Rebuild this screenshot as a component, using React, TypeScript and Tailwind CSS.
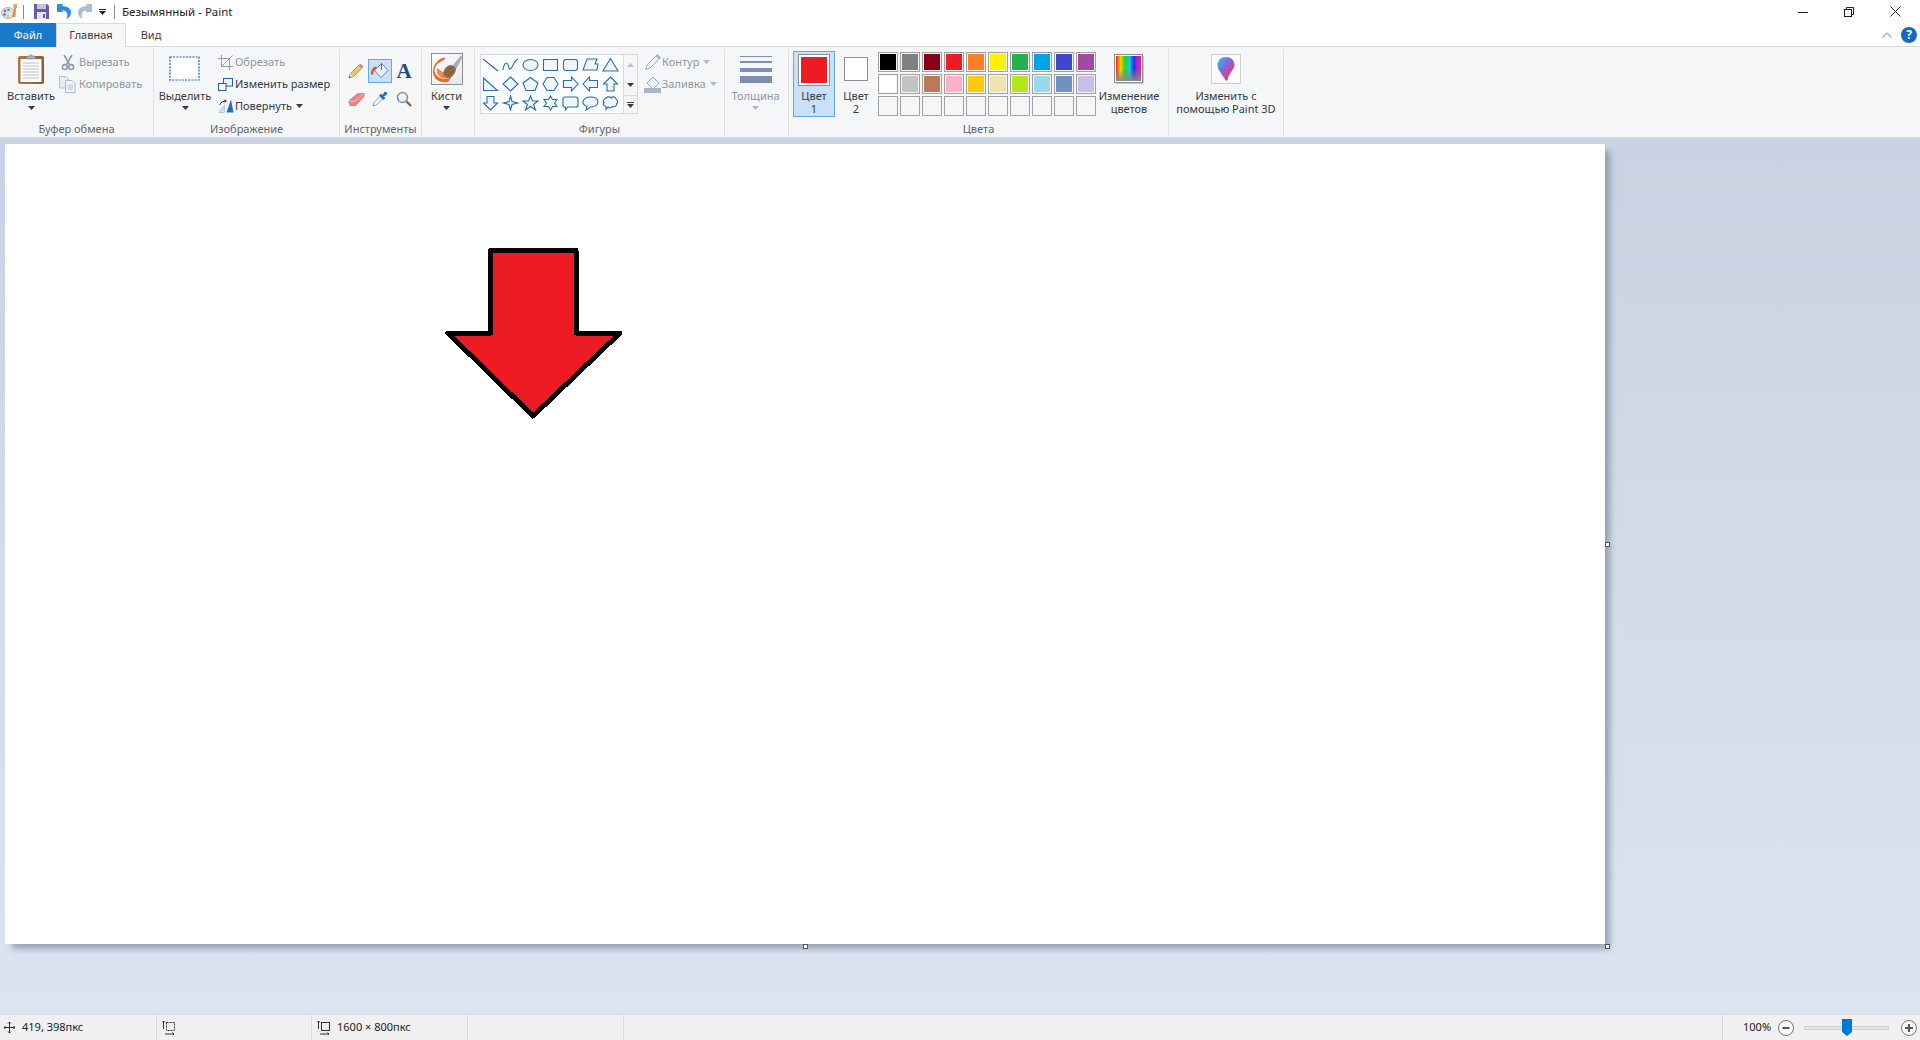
import React from "react";

const row1 = ["#000000", "#7f7f7f", "#880015", "#ed1c24", "#ff7f27", "#fff200", "#22b14c", "#00a2e8", "#3f48cc", "#a349a4"];
const row2 = ["#ffffff", "#c3c3c3", "#b97a57", "#ffaec9", "#ffc90e", "#efe4b0", "#b5e61d", "#99d9ea", "#7092be", "#c8bfe7"];
const row3 = Array.from({ length: 10 }, () => "");

// gallery shapes, one 16x16 path per cell
const shapes = [
  "M1 2L16 14",
  "M1 13C2 6 5 4 6 8S8 14 10 10 13 3 16 2",
  "M8.5 2.5C13 2.5 16 5 16 8S13 13.5 8.5 13.5 1 11 1 8 4 2.5 8.5 2.5Z",
  "M1.5 2.5H15.5V13.5H1.5Z",
  "M4 2.5H13Q15.5 2.5 15.5 5V11Q15.5 13.5 13 13.5H4Q1.5 13.5 1.5 11V5Q1.5 2.5 4 2.5Z",
  "M5 2H15L13 7H16L15 13H1Z",
  "M8.5 1.5L16 14H1Z",
  "M1.5 2L15.5 14.5H1.5Z",
  "M8.5 1L16 8L8.5 15L1 8Z",
  "M8.5 1.5L16 7L13 14.5H4L1 7Z",
  "M5 1.5H12L16 8L12 14.5H5L1 8Z",
  "M1.5 4.5H9.5V1L16 8L9.5 15V11.5H1.5Z",
  "M15.5 4.5H7.5V1L1 8L7.5 15V11.5H15.5Z",
  "M8.5 1L15.5 8H12V15H5V8H1.5Z",
  "M5 1.5H12V8H15.5L8.5 15L1.5 8H5Z",
  "M8.5 1L10 6.5L15.5 8L10 9.5L8.5 15L7 9.5L1.5 8L7 6.5Z",
  "M8.5 1L10.5 6H16L11.5 9.5L13.5 15L8.5 11.5L3.5 15L5.5 9.5L1 6H6.5Z",
  "M8.5 1L10.5 4.5H15L12.5 8L15 11.5H10.5L8.5 15L6.5 11.5H2L4.5 8L2 4.5H6.5Z",
  "M3 2H14Q16 2 16 4V10Q16 12 14 12H6L3.5 15V12H3Q1 12 1 10V4Q1 2 3 2Z",
  "M8.5 2C13 2 16 4 16 7S13 12 8.5 12L4 15L5 11.5C2.5 10.5 1 9 1 7 1 4 4 2 8.5 2Z",
  "M4 3C6 1 8 2 9 3 11 1 14 2 14 4 16 5 16 8 14.5 9 15 11 12 12.5 10.5 11.5 9 13.5 6.5 13 6 12L4 14.5V11.5C2 11.5 .5 9 2 7.5 .5 6 2 3.5 4 3Z",
];

function Caret({ color = "#3b3b3b" }: { color?: string }) {
  return (
    <svg width="7" height="4" viewBox="0 0 7 4" className="block">
      <path d="M0 0H7L3.5 4Z" fill={color} />
    </svg>
  );
}

function PasteIcon() {
  return (
    <svg width="28" height="32" viewBox="0 0 28 32">
      <defs>
        <linearGradient id="brd" x1="0" y1="0" x2="1" y2="0">
          <stop offset="0" stopColor="#a9794a" />
          <stop offset="1" stopColor="#8a5d34" />
        </linearGradient>
      </defs>
      <rect x="1" y="3" width="26" height="28" rx="2" fill="url(#brd)" />
      <rect x="3.5" y="6" width="21" height="23" fill="#fbfbfb" />
      <path d="M6 10H22M6 13H22M6 16H22M6 19H22M6 22H22M6 25H22" stroke="#b4c0cf" />
      <path d="M9 6L10.5 3H12.5Q14 0 15.5 3H17.5L19 6Z" fill="#a8adb3" stroke="#7d8288" strokeWidth=".6" />
    </svg>
  );
}

function CutIcon() {
  return (
    <svg width="14" height="17" viewBox="0 0 14 17" fill="none" stroke="#8c9cb2" strokeWidth="1.6">
      <path d="M3 1L8.5 10.5M11 1L5.5 10.5" />
      <circle cx="3.8" cy="13" r="2.4" />
      <circle cx="10.2" cy="13" r="2.4" />
    </svg>
  );
}

function CopyIcon() {
  return (
    <svg width="17" height="17" viewBox="0 0 17 17">
      <path d="M.5.5H7L9.5 3V12H.5Z" fill="#e4ebf4" stroke="#b3c0d2" />
      <path d="M6.5 4.5H13L16 7.5V16.5H6.5Z" fill="#f3f6fa" stroke="#a9b8cb" />
      <path d="M8.5 9H14M8.5 11H14M8.5 13H14" stroke="#b3c0d2" />
    </svg>
  );
}

function CropIcon() {
  return (
    <svg width="15" height="15" viewBox="0 0 15 15" fill="none" stroke="#8fa0b6">
      <path d="M3.5 0V11.5H15M0 3.5H11.5V15" />
      <path d="M3.5 11.5L11.5 3.5M11 4L14.5 .5" />
    </svg>
  );
}

function ResizeIcon() {
  return (
    <svg width="15" height="13" viewBox="0 0 15 13" fill="#fff" stroke="#1d5fa8">
      <rect x="5.5" y=".5" width="9" height="7.5" fill="#eef4fb" />
      <rect x=".5" y="5.5" width="7.5" height="7" />
    </svg>
  );
}

function RotateIcon() {
  return (
    <svg width="16" height="14" viewBox="0 0 16 14">
      <path d="M8.5 13.5L13 .5L15.5 13.5Z" fill="#2a6db3" />
      <path d="M1 13.5L6.5 6V13.5Z" fill="#cfe0f1" stroke="#8fb3d6" strokeWidth=".6" />
      <path d="M1.5 6Q3 2 7.5 2" fill="none" stroke="#333" />
      <path d="M6.5 .2L9 2L6.5 3.8Z" fill="#333" />
    </svg>
  );
}

function SelectIcon() {
  return (
    <svg width="32" height="26" viewBox="0 0 32 26">
      <rect x="1" y="1" width="29" height="23" fill="#fff" stroke="#1b5ea6" strokeWidth="1.2" strokeDasharray="2 1.2" />
    </svg>
  );
}

function PencilIcon({ tone = "color" }: { tone?: "color" | "gray" }) {
  if (tone === "gray") {
    return (
      <svg width="16" height="16" viewBox="0 0 16 16">
        <path d="M.5 15.5L2 11L11 2L14 5L5 14Z" fill="#f2f4f7" stroke="#9aa9bd" />
        <path d="M11 2L12.5 .5L15.5 3.5L14 5Z" fill="#b6c2d1" stroke="#9aa9bd" />
      </svg>
    );
  }
  return (
    <svg width="16" height="16" viewBox="0 0 16 16">
      <path d="M1 15L2.2 10.8L10.8 2.2L13.8 5.2L5.2 13.8Z" fill="#f1c85c" stroke="#9a7a34" strokeWidth=".7" />
      <path d="M1 15L2.2 10.8L5.2 13.8Z" fill="#f0dcb4" />
      <path d="M1 15L1.5 13L3 14.5Z" fill="#333" />
      <path d="M10.8 2.2L12.5 .5L15.5 3.5L13.8 5.2Z" fill="#d7848d" />
    </svg>
  );
}

function FillIcon() {
  return (
    <svg width="20" height="20" viewBox="0 0 20 20">
      <path d="M11.5 2.5L18 9.5L11 16.5L4.5 9.5Z" fill="#e9eff6" stroke="#6b88a8" />
      <path d="M11.5 2V9" stroke="#56708e" />
      <path d="M6.5 6.5Q2 7.5 2 13.5" fill="none" stroke="#e7591f" strokeWidth="2.5" />
    </svg>
  );
}

function EraserIcon() {
  return (
    <svg width="17" height="15" viewBox="0 0 17 15">
      <path d="M.8 9L9.5 1.5H16.2L16 4.5L7.5 13.5H2Z" fill="#e98787" stroke="#c66b6b" strokeWidth=".7" />
      <path d="M.8 9L6.5 9.5L15.8 1.8" fill="none" stroke="#f6b9b9" />
    </svg>
  );
}

function DropperIcon() {
  return (
    <svg width="16" height="16" viewBox="0 0 16 16">
      <path d="M1 15L2 11.5L8 5.5L10.5 8L4.5 14Z" fill="#f3f6fa" stroke="#7c8797" strokeWidth=".8" />
      <path d="M7 4.5L9 2.5L10.5 4L12.5 .8Q15.5 .5 15.2 3.5L12 5.5L13.5 7L11.5 9Z" fill="#2673bb" />
    </svg>
  );
}

function LensIcon() {
  return (
    <svg width="16" height="16" viewBox="0 0 16 16">
      <circle cx="6.5" cy="6.5" r="5" fill="#eef3f8" stroke="#8b949e" strokeWidth="1.6" />
      <path d="M10.5 10.5L15 15" stroke="#8a6540" strokeWidth="2.4" />
    </svg>
  );
}

function BrushIcon() {
  return (
    <svg width="32" height="32" viewBox="0 0 32 32">
      <defs>
        <linearGradient id="bg-brush" x1="0" y1="0" x2="1" y2="1">
          <stop offset="0" stopColor="#ffffff" />
          <stop offset="1" stopColor="#e4e7ea" />
        </linearGradient>
      </defs>
      <rect x=".5" y=".5" width="31" height="31" fill="url(#bg-brush)" stroke="#8e8e8e" />
      <path d="M12 5Q16 4 13 7Q5 10 3.5 16Q3 22 9 25Q14 27 20 25L17 29Q8 30 4 25Q0 19 3.5 12Q7 6 12 5Z" fill="#ea6a2a" />
      <path d="M6 15L13 20L20 25Q12 27 8 23Q5 20 6 15Z" fill="#f08a45" />
      <path d="M12 21Q13 14 19 12Q23 12 25 15Q25 21 19 25Q15 26 12 21Z" fill="#8f6a45" />
      <path d="M15 20L21 14M17 23L23 17" stroke="#6d4f32" strokeWidth=".8" />
      <path d="M22 12L30 2.5L31.5 4L25.5 15.5Z" fill="#a4b0bf" />
    </svg>
  );
}

function ThicknessIcon() {
  return (
    <svg width="32" height="27" viewBox="0 0 32 27" fill="#7d8fb0">
      <rect x="0" y="0" width="32" height="1" />
      <rect x="0" y="5" width="32" height="2" />
      <rect x="0" y="12" width="32" height="4" />
      <rect x="0" y="20" width="32" height="7" />
    </svg>
  );
}

function BucketGrayIcon() {
  return (
    <svg width="17" height="17" viewBox="0 0 17 17">
      <rect x="0" y="12" width="17" height="5" fill="#a9b6c8" />
      <path d="M9 1L15 7L9 13L3 7Z" fill="#eef1f5" stroke="#98a6b8" />
    </svg>
  );
}

function RainbowIcon() {
  return (
    <svg width="30" height="30" viewBox="0 0 30 30">
      <defs>
        <linearGradient id="rb" x1="0" y1="0" x2="1" y2="0">
          <stop offset="0" stopColor="#ff2020" />
          <stop offset=".18" stopColor="#ffd800" />
          <stop offset=".36" stopColor="#20d820" />
          <stop offset=".54" stopColor="#10d0e0" />
          <stop offset=".72" stopColor="#2030f0" />
          <stop offset=".88" stopColor="#d020d0" />
          <stop offset="1" stopColor="#e02060" />
        </linearGradient>
        <linearGradient id="rbv" x1="0" y1="0" x2="0" y2="1">
          <stop offset="0" stopColor="#000" stopOpacity="0.05" />
          <stop offset=".5" stopColor="#808080" stopOpacity="0" />
          <stop offset="1" stopColor="#8a8a8a" stopOpacity="0.95" />
        </linearGradient>
      </defs>
      <rect x=".5" y=".5" width="28" height="28" fill="#fff" stroke="#8e8e8e" />
      <rect x="2" y="2" width="25" height="25" fill="url(#rb)" />
      <rect x="2" y="2" width="25" height="25" fill="url(#rbv)" />
      <path d="M29.5 2V29.5H2" fill="none" stroke="#c9c9c9" />
    </svg>
  );
}

function Paint3dIcon() {
  return (
    <svg width="30" height="30" viewBox="0 0 30 30">
      <defs>
        <linearGradient id="p3d" x1="0" y1="0" x2="1" y2="1">
          <stop offset="0" stopColor="#32c3e8" />
          <stop offset=".45" stopColor="#8a62e0" />
          <stop offset=".75" stopColor="#ee3a72" />
          <stop offset="1" stopColor="#f6a51c" />
        </linearGradient>
      </defs>
      <rect x=".5" y=".5" width="29" height="29" fill="#fbfbfb" stroke="#cfcfcf" />
      <path d="M15 3C20 3 23.5 6.5 23.5 11C23.5 16 18 18 16.5 26.5H14.5C13 22 6.5 17 6.5 11C6.5 6.5 10 3 15 3Z" fill="url(#p3d)" />
    </svg>
  );
}

function AppIcon() {
  return (
    <svg width="17" height="17" viewBox="0 0 17 17">
      <ellipse cx="7" cy="10" rx="6.5" ry="5.5" fill="#dbe6ee" stroke="#7f97ad" strokeWidth=".7" />
      <circle cx="4" cy="8" r="1.3" fill="#e14b3c" />
      <circle cx="7.5" cy="7" r="1.3" fill="#3ea34f" />
      <circle cx="3.5" cy="11.5" r="1.3" fill="#2f7cd0" />
      <circle cx="7" cy="13" r="1.2" fill="#e9b82e" />
      <path d="M11 14L13 5H15L14.5 14Z" fill="#e98f33" />
      <path d="M12.5 1H16V5H12.5Z" fill="#d9a36b" />
    </svg>
  );
}

function SaveIcon() {
  return (
    <svg width="15" height="15" viewBox="0 0 15 15">
      <path d="M0 0H13L15 2V15H0Z" fill="#6b5ba6" />
      <rect x="3" y="0" width="9" height="5" fill="#c9c3e2" />
      <rect x="3" y="8" width="9" height="7" fill="#e6e3f2" />
      <rect x="9" y="10" width="2" height="4" fill="#6b5ba6" />
    </svg>
  );
}

function UndoIcon({ color }: { color: string }) {
  return (
    <svg width="14" height="15" viewBox="0 0 14 15">
      <path d="M0 0L6.5 0L4.8 1.9Q14 2.2 14 8.5Q14 12.5 9.5 15Q11 12 10.2 9.5Q9 6 4.8 6.5L6.5 8L0 8Z" fill={color} />
    </svg>
  );
}

function HelpIcon() {
  return (
    <span className="flex h-[16px] w-[16px] items-center justify-center rounded-full bg-[#1668bf] text-[12px] font-bold leading-none text-white">
      ?
    </span>
  );
}

function SmallRow({
  icon,
  label,
  width,
  muted,
  caret,
}: {
  icon: React.ReactNode;
  label: string;
  width: string;
  muted?: boolean;
  caret?: boolean;
}) {
  return (
    <div className="flex h-[22px] items-center">
      <span className={`flex items-center justify-center ${width}`}>{icon}</span>
      <span className={muted ? "text-[#8f97a1]" : "text-[#333a44]"}>{label}</span>
      {caret && (
        <span className="ml-[4px]">
          <Caret color={muted ? "#b4bac2" : "#3b3b3b"} />
        </span>
      )}
    </div>
  );
}

function BigButton({
  icon,
  lines,
  width,
  muted,
  caret = true,
}: {
  icon: React.ReactNode;
  lines: string[];
  width: string;
  muted?: boolean;
  caret?: boolean;
}) {
  return (
    <div className={`flex flex-col items-center ${width}`}>
      <div className="flex h-[40px] items-center justify-center">{icon}</div>
      <div className={`text-center leading-[13px] ${muted ? "text-[#8f97a1]" : "text-[#333a44]"}`}>
        {lines.map((l) => (
          <div key={l} className="whitespace-nowrap">
            {l}
          </div>
        ))}
      </div>
      {caret && (
        <div className="mt-[4px]">
          <Caret color={muted ? "#b4bac2" : "#3b3b3b"} />
        </div>
      )}
    </div>
  );
}

function Group({
  width,
  label,
  children,
}: {
  width: string;
  label?: string;
  children: React.ReactNode;
}) {
  return (
    <div className={`flex h-full flex-col border-r border-[#e1e2e4] ${width}`}>
      <div className="flex flex-1">{children}</div>
      <div className="h-[14px] whitespace-nowrap text-center leading-[14px] text-[#5e6670]">{label}</div>
    </div>
  );
}

function Swatch({ color }: { color: string }) {
  return (
    <div className="h-[20px] w-[20px] border border-[#a0a0a0] p-[1px]">
      <div className="h-full w-full" style={{ backgroundColor: color || "transparent" }} />
    </div>
  );
}

function Ribbon() {
  const tools = [
    <PencilIcon key="pencil" />,
    <FillIcon key="fill" />,
    <span key="a" className="font-['Liberation_Serif',serif] text-[21px] font-bold leading-none text-[#1d4a80]">
      A
    </span>,
    <EraserIcon key="eraser" />,
    <DropperIcon key="dropper" />,
    <LensIcon key="lens" />,
  ];
  return (
    <div className="flex h-[92px] border-y border-[#dadbdc] bg-[#f5f6f7] pb-[1px] pt-[2px] text-[11px]">
      <Group width="w-[154px]" label="Буфер обмена">
        <BigButton icon={<PasteIcon />} lines={["Вставить"]} width="w-[62px]" />
        <div className="mt-[2px]">
          <SmallRow icon={<CutIcon />} label="Вырезать" width="-ml-[3px] w-[20px] pr-[3px]" muted />
          <SmallRow icon={<CopyIcon />} label="Копировать" width="-ml-[3px] w-[20px] pr-[3px]" muted />
        </div>
      </Group>

      <Group width="w-[186px]" label="Изображение">
        <BigButton icon={<SelectIcon />} lines={["Выделить"]} width="w-[62px]" />
        <div className="mt-[2px]">
          <SmallRow icon={<CropIcon />} label="Обрезать" width="w-[19px]" muted />
          <SmallRow icon={<ResizeIcon />} label="Изменить размер" width="w-[19px]" />
          <SmallRow icon={<RotateIcon />} label="Повернуть" width="w-[19px]" caret />
        </div>
      </Group>

      <Group width="w-[82px]" label="Инструменты">
        <div className="grid grid-cols-[repeat(3,24px)] grid-rows-[repeat(2,28px)] pl-[4px] pt-[8px]">
          {tools.map((tool, i) => (
            <div key={i} className="flex items-center justify-center">
              <div
                className={`flex h-[24px] w-[24px] items-center justify-center ${
                  i === 1 ? "border border-[#62a8eb] bg-[#c9e0f7]" : ""
                }`}
              >
                {tool}
              </div>
            </div>
          ))}
        </div>
      </Group>

      <Group width="w-[53px]">
        <BigButton icon={<BrushIcon />} lines={["Кисти"]} width="w-[49px]" />
      </Group>

      <Group width="w-[250px]" label="Фигуры">
        <div className="ml-[5px] mt-[5px] flex h-[60px] border border-[#dadbdc]">
          <div className="grid w-[142px] grid-cols-[repeat(7,20px)] grid-rows-3 bg-[#fbfcfe]">
            {shapes.map((d) => (
              <div key={d} className="flex items-center pl-[1px]">
                <svg width="17" height="16" viewBox="0 0 17 16">
                  <path d={d} fill={d.endsWith("Z") ? "#eef6fb" : "none"} stroke="#2a6db0" strokeWidth="1.1" />
                </svg>
              </div>
            ))}
          </div>
          <div className="flex w-[14px] flex-col border-l border-[#dadbdc]">
            <div className="flex h-[20px] items-center justify-center">
              <svg width="7" height="4" viewBox="0 0 7 4">
                <path d="M0 4H7L3.5 0Z" fill="#bcc3cc" />
              </svg>
            </div>
            <div className="flex h-[20px] items-center justify-center">
              <Caret />
            </div>
            <div className="flex h-[18px] flex-col items-center justify-center gap-[1px] border-t border-[#dadbdc]">
              <div className="h-[1px] w-[7px] bg-[#3b3b3b]" />
              <Caret />
            </div>
          </div>
        </div>
        <div className="ml-[5px] mt-[2px]">
          <SmallRow icon={<PencilIcon tone="gray" />} label="Контур" width="w-[19px]" muted caret />
          <SmallRow icon={<BucketGrayIcon />} label="Заливка" width="w-[19px]" muted caret />
        </div>
      </Group>

      <Group width="w-[64px]">
        <BigButton icon={<ThicknessIcon />} lines={["Толщина"]} width="w-[61px]" muted />
      </Group>

      <Group width="w-[380px]" label="Цвета">
        <div className="ml-[4px] mt-[2px] flex h-[66px] w-[42px] flex-col items-center border border-[#62a8eb] bg-[#c9e0f7] pt-[2px] text-center leading-[13px] text-[#333a44]">
          <div className="h-[32px] w-[32px] border border-[#8e8e8e] bg-white p-[2px]">
            <div className="h-full w-full bg-[#ed1c24]" />
          </div>
          <div className="mt-[3px]">Цвет</div>
          <div>1</div>
        </div>
        <div className="flex w-[42px] flex-col items-center text-center leading-[13px] text-[#333a44]">
          <div className="flex h-[40px] items-center">
            <div className="h-[24px] w-[24px] border border-[#8e8e8e] bg-white" />
          </div>
          <div>Цвет</div>
          <div>2</div>
        </div>
        <div className="ml-[1px] mt-[3px] grid h-fit grid-cols-[repeat(10,20px)] gap-[2px]">
          {[...row1, ...row2, ...row3].map((c, i) => (
            <Swatch key={i} color={c} />
          ))}
        </div>
        <BigButton icon={<RainbowIcon />} lines={["Изменение", "цветов"]} width="w-[66px]" caret={false} />
      </Group>

      <Group width="w-[115px]">
        <BigButton icon={<Paint3dIcon />} lines={["Изменить с", "помощью Paint 3D"]} width="w-full" caret={false} />
      </Group>
    </div>
  );
}

function Handle({ className }: { className: string }) {
  return <div className={`absolute h-[5px] w-[5px] border border-[#555] bg-white ${className}`} />;
}

function Canvas() {
  return (
    <div className="flex-1 bg-[linear-gradient(180deg,#c8d2e2_0%,#dbe5f1_100%)] pl-[5px] pt-[6px]">
      <div className="relative h-[800px] w-[1600px] bg-white shadow-[6px_6px_6px_-1px_rgba(100,115,140,0.55)]">
        <svg width="1600" height="800" className="block" shapeRendering="crispEdges">
          <polygon
            points="485.5,106.5 571,106.5 571,189 615,189 528,272 443,189 485.5,189"
            fill="#ed1c24"
            stroke="#000"
            strokeWidth="5"
            strokeLinejoin="round"
          />
        </svg>
        <Handle className="left-[1600px] top-[398px]" />
        <Handle className="left-[798px] top-[800px]" />
        <Handle className="left-[1600px] top-[800px]" />
      </div>
    </div>
  );
}

function StatusBar() {
  return (
    <div className="flex h-[26px] items-stretch border-t border-[#d9d9d9] bg-[#f0f0f0] text-[11px] text-[#222]">
      <div className="flex w-[157px] items-center gap-[7px] border-r border-[#d9d9d9] pl-[4px]">
        <svg width="11" height="11" viewBox="0 0 11 11" fill="none" stroke="#333">
          <path d="M5.5 0V11M0 5.5H11" />
          <path d="M4 1.5L5.5 0L7 1.5M4 9.5L5.5 11L7 9.5M1.5 4L0 5.5L1.5 7M9.5 4L11 5.5L9.5 7" />
        </svg>
        <span>419, 398пкс</span>
      </div>
      <div className="flex w-[155px] items-center border-r border-[#d9d9d9] pl-[5px]">
        <svg width="14" height="14" viewBox="0 0 14 14" fill="none" stroke="#333">
          <path d="M1.5 0V8M0 1.5L1.5 0L3 1.5M3 13H12M10.5 11.5L12 13L10.5 14" />
          <rect x="4.5" y="1.5" width="8" height="8" strokeDasharray="2 1" />
        </svg>
      </div>
      <div className="flex w-[156px] items-center gap-[6px] border-r border-[#d9d9d9] pl-[5px]">
        <svg width="14" height="14" viewBox="0 0 14 14" fill="none" stroke="#333">
          <path d="M1.5 0V8M0 1.5L1.5 0L3 1.5M3 13H12M10.5 11.5L12 13L10.5 14" />
          <rect x="4.5" y="1.5" width="8" height="8" />
        </svg>
        <span>1600 × 800пкс</span>
      </div>
      <div className="w-[156px] border-r border-[#d9d9d9]" />
      <div className="flex-1 border-r border-[#d9d9d9]" />
      <div className="flex w-[197px] items-center pl-[20px]">
        <span className="w-[35px]">100%</span>
        <svg width="16" height="16" viewBox="0 0 16 16" fill="#fafafa" stroke="#777">
          <circle cx="8" cy="8" r="7.5" />
          <path d="M4.5 8H11.5" strokeWidth="2" stroke="#555" />
        </svg>
        <div className="relative ml-[10px] h-[4px] w-[85px] border border-[#d2d2d2] bg-[#e4e4e4]">
          <svg width="10" height="17" viewBox="0 0 10 17" className="absolute left-[37px] top-[-8px]">
            <path d="M0 0H10V13L5 17L0 13Z" fill="#0078d7" />
          </svg>
        </div>
        <svg width="16" height="16" viewBox="0 0 16 16" fill="#fafafa" stroke="#777" className="ml-[12px]">
          <circle cx="8" cy="8" r="7.5" />
          <path d="M4 8H12M8 4V12" strokeWidth="2" stroke="#555" />
        </svg>
      </div>
    </div>
  );
}

export default function App() {
  return (
    <div className="flex h-[1040px] w-[1920px] flex-col overflow-hidden bg-white font-['Noto_Sans',sans-serif]">
      {/* title bar */}
      <div className="flex h-[23px] items-center">
        <span className="ml-[1px]">
          <AppIcon />
        </span>
        <div className="ml-[5px] h-[14px] w-[1px] bg-[#8a8a8a]" />
        <span className="ml-[10px]">
          <SaveIcon />
        </span>
        <span className="ml-[8px]">
          <UndoIcon color="#2b8fdc" />
        </span>
        <span className="ml-[7px] -scale-x-100">
          <UndoIcon color="#a9bdd2" />
        </span>
        <div className="ml-[7px] flex flex-col items-center gap-[1px]">
          <div className="h-[1px] w-[7px] bg-[#222]" />
          <Caret color="#222" />
        </div>
        <div className="ml-[8px] h-[14px] w-[1px] bg-[#8a8a8a]" />
        <span className="ml-[7px] text-[11.5px] text-[#222]">Безымянный - Paint</span>
        <div className="ml-auto flex h-full items-center pr-[2px]">
          <div className="flex w-[46px] justify-center">
            <svg width="10" height="10" viewBox="0 0 10 10" stroke="#222">
              <path d="M0 5.5H10" />
            </svg>
          </div>
          <div className="flex w-[46px] justify-center">
            <svg width="10" height="10" viewBox="0 0 10 10" fill="none" stroke="#222">
              <rect x=".5" y="2.5" width="7" height="7" />
              <path d="M2.5 2.5V.5H9.5V7.5H7.5" />
            </svg>
          </div>
          <div className="flex w-[46px] justify-center">
            <svg width="11" height="11" viewBox="0 0 11 11" stroke="#222">
              <path d="M.5 .5L10.5 10.5M10.5 .5L.5 10.5" />
            </svg>
          </div>
        </div>
      </div>

      {/* tabs */}
      <div className="relative z-10 -mb-[1px] flex h-[24px] text-[11px]">
        <div className="flex w-[56px] items-center justify-center bg-[#1979ca] text-white">Файл</div>
        <div className="flex w-[70px] items-center justify-center border-x border-t border-[#dadbdc] bg-[#f5f6f7] text-[#333a44]">
          Главная
        </div>
        <div className="flex w-[50px] items-center justify-center text-[#333a44]">Вид</div>
        <div className="ml-auto flex items-center gap-[9px] pr-[3px]">
          <svg width="10" height="6" viewBox="0 0 10 6" fill="none" stroke="#a8a8a8" strokeWidth="1.2">
            <path d="M.5 5.5L5 1L9.5 5.5" />
          </svg>
          <HelpIcon />
        </div>
      </div>

      <Ribbon />
      <Canvas />
      <StatusBar />
    </div>
  );
}
